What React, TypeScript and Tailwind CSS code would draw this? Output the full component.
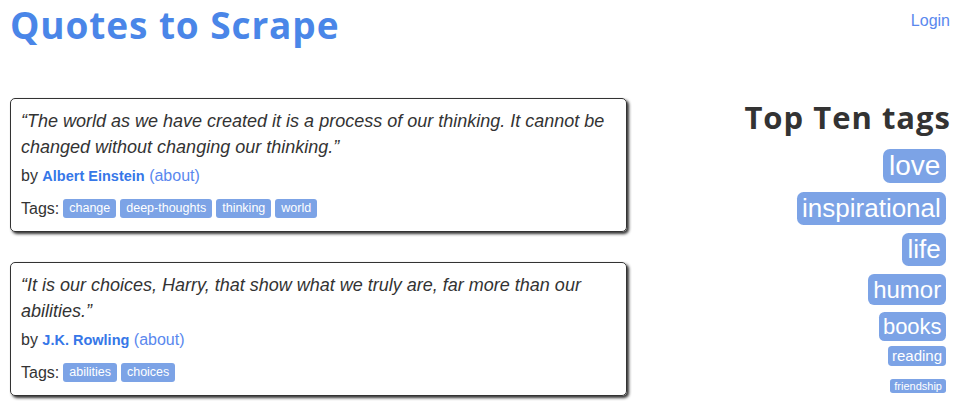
import React from "react";

type Quote = { text: string; author: string; tags: string[] };

const quotes: Quote[] = [
  {
    text: "“The world as we have created it is a process of our thinking. It cannot be changed without changing our thinking.”",
    author: "Albert Einstein",
    tags: ["change", "deep-thoughts", "thinking", "world"],
  },
  {
    text: "“It is our choices, Harry, that show what we truly are, far more than our abilities.”",
    author: "J.K. Rowling",
    tags: ["abilities", "choices"],
  },
];

const topTags = [
  { t: "love", cls: "text-[28px] h-[34px] leading-[34px] mt-0 px-[0.2em]" },
  { t: "inspirational", cls: "text-[26px] h-[33px] leading-[33px] mt-[9px] px-[0.2em]" },
  { t: "life", cls: "text-[26px] h-[33px] leading-[33px] mt-[8px] px-[0.2em]" },
  { t: "humor", cls: "text-[24px] h-[31px] leading-[31px] mt-[8px] px-[0.2em]" },
  { t: "books", cls: "text-[22px] h-[29px] leading-[29px] mt-[7px] px-[0.2em]" },
  { t: "reading", cls: "text-[15px] h-[20px] leading-[20px] mt-[5px] px-[4px]" },
  { t: "friendship", cls: "text-[11px] h-[14px] leading-[14px] mt-[13px] px-[4px]" },
];

function QuoteCard({ q }: { q: Quote }) {
  return (
    <div className="h-[134px] border border-[#333333] rounded-[5px] shadow-[2px_2px_3px_#333333] px-[10px] pt-[10px]">
      <span className="block italic text-[18px] leading-[25.7px] mb-[5px]">{q.text}</span>
      <span className="block text-[16px] leading-[25.7px] mb-[5px] -mt-[2px]">
        by <small className="text-[14.5px] font-bold text-[#3677e8]">{q.author}</small>{" "}
        <a className="text-[#5a88ee]">(about)</a>
      </span>
      <div className="text-[16px] leading-[25px] flex items-center mt-[6px]">
        <span>Tags:</span>
        <div className="flex gap-[4px] ml-[4px]">
          {q.tags.map((t) => (
            <a
              key={t}
              className="inline-block bg-[#7ca3e6] text-white text-[12.5px] h-[19px] leading-[18px] px-[6px] rounded-[3px]"
            >
              {t}
            </a>
          ))}
        </div>
      </div>
    </div>
  );
}

export default function App() {
  return (
    <div className="w-[960px] h-[406px] overflow-hidden bg-white text-[#333333] font-['Liberation_Sans',Arial,sans-serif] px-[10px]">
      <div className="flex justify-between items-start h-[98px]">
        <h1 className="font-['Open_Sans',sans-serif] font-bold text-[37px] leading-[38px] mt-[6px] text-[#4a86e8] tracking-[0.9px]">
          Quotes to Scrape
        </h1>
        <a className="text-[16px] leading-[18px] mt-[12px] text-[#5a88ee]">Login</a>
      </div>
      <div className="flex justify-between items-start">
        <div className="w-[617px] flex flex-col gap-[30px]">
          {quotes.map((q) => (
            <QuoteCard key={q.author} q={q} />
          ))}
        </div>
        <div className="flex flex-col items-end">
          <div className="h-[51px]">
            <h2 className="font-['Open_Sans',sans-serif] font-bold text-[31px] leading-[32px] mt-[3px] text-[#333333] tracking-[1px] -mr-[1px]">
              Top Ten tags
            </h2>
          </div>
          {topTags.map((tg) => (
            <a
              key={tg.t}
              className={`inline-block bg-[#7ca3e6] text-white rounded-[0.25em] mr-[4px] ${tg.cls}`}
            >
              {tg.t}
            </a>
          ))}
        </div>
      </div>
    </div>
  );
}
